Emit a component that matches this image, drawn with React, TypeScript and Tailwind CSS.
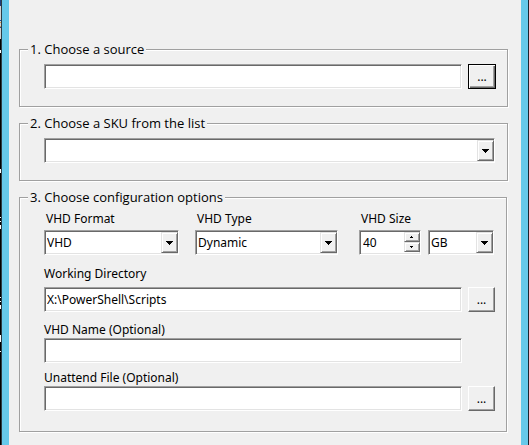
import { useState, type ReactNode } from "react";

const sunken =
  "border border-t-[#a0a0a0] border-l-[#a0a0a0] border-r-white border-b-white bg-white shadow-[inset_1px_1px_0_#696969,inset_-1px_-1px_0_#e3e3e3] rounded-none outline-none text-[12px] leading-[16px] text-black";
const raised =
  "border border-t-[#e3e3e3] border-l-[#e3e3e3] border-r-[#696969] border-b-[#696969] bg-[#f0f0f0] shadow-[inset_1px_1px_0_#fff,inset_-1px_-1px_0_#a0a0a0]";

// Sliver of the console window that shows behind the dialog's left edge.
const backdrop: [height: number, color: string][] = [
  [6, "#1d3c7c"],
  [14, "#d4d4d4"],
  [1, "#1d4c9c"],
  [1, "#d4d4d4"],
  [1, "#d09a50"],
  [3, "#d4d4d4"],
  [1, "#d09a50"],
  [1, "#1d4c9c"],
  [11, "#d4d4d4"],
  [11, "#000"],
  [3, "#fff"],
  [116, "#000"],
  [4, "#fff"],
  [44, "#000"],
  [1, "#fff"],
  [3, "#000"],
  [1, "#fff"],
  [3, "#000"],
  [4, "#fff"],
  [68, "#000"],
  [1, "#fff"],
  [3, "#000"],
  [1, "#fff"],
  [3, "#000"],
  [4, "#fff"],
  [26, "#000"],
  [7, "#fff"],
  [9, "#000"],
  [1, "#fff"],
];

function Group({ title, className, children }: { title: string; className: string; children: ReactNode }) {
  return (
    <fieldset
      className={`min-w-0 border border-[#a0a0a0] pr-[11px] pl-6 shadow-[inset_1px_1px_0_#fff,1px_1px_0_#fff] ${className}`}
    >
      <legend className="-ml-4 bg-[#f0f0f0] px-0.5 font-['Open_Sans','Noto_Sans',sans-serif] text-[13px] leading-[16px]">
        {title}
      </legend>
      {children}
    </fieldset>
  );
}

function TextField({ id, label, value = "" }: { id: string; label?: string; value?: string }) {
  return (
    <input id={id} aria-label={label} type="text" defaultValue={value} className={`h-[25px] min-w-0 flex-1 px-0.5 ${sunken}`} />
  );
}

function BrowseButton({ label, focused = false }: { label: string; focused?: boolean }) {
  return (
    <button
      type="button"
      aria-label={label}
      className={`h-[25px] shrink-0 bg-[#f0f0f0] text-[12px] leading-[16px] ${
        focused
          ? "w-7 border border-black shadow-[inset_1px_1px_0_#fff,inset_-1px_-1px_0_#696969,inset_-2px_-2px_0_#a0a0a0]"
          : "w-[27px] border border-t-white border-l-white border-r-[#696969] border-b-[#696969] shadow-[inset_-1px_-1px_0_#a0a0a0]"
      }`}
    >
      ...
    </button>
  );
}

function DropDown({ id, label, options, className }: { id: string; label?: string; options: string[]; className: string }) {
  return (
    <div className={`relative ${className}`}>
      <select id={id} aria-label={label} className={`block h-[25px] w-full appearance-none pr-5 pl-0.5 ${sunken}`}>
        {options.map((option) => (
          <option key={option}>{option}</option>
        ))}
      </select>
      <span
        className={`pointer-events-none absolute top-0.5 right-px flex h-[21px] w-[17px] items-center justify-center ${raised}`}
      >
        <svg width="7" height="4" viewBox="0 0 7 4" shapeRendering="crispEdges" aria-hidden="true">
          <path d="M0 0h7v1H0zM1 1h5v1H1zM2 2h3v1H2zM3 3h1v1H3z" />
        </svg>
      </span>
    </div>
  );
}

function SizeSpinner() {
  const [size, setSize] = useState(40);
  return (
    <div className="relative w-[62px]">
      <input
        id="vhd-size"
        type="text"
        inputMode="numeric"
        value={size}
        onChange={(e) => setSize(Number(e.target.value) || 0)}
        className={`block h-[25px] w-full pr-5 pl-[3px] ${sunken}`}
      />
      <div className="absolute top-0.5 right-px flex w-4 flex-col">
        <button type="button" aria-label="Increase size" onClick={() => setSize(size + 1)} className={`flex h-[10px] items-center justify-center ${raised}`}>
          <svg width="4" height="2" viewBox="0 0 4 2" shapeRendering="crispEdges" aria-hidden="true">
            <path d="M1 0h1v1H1zM0 1h3v1H0z" />
          </svg>
        </button>
        <button type="button" aria-label="Decrease size" onClick={() => setSize(size - 1)} className={`flex h-[10px] items-center justify-center ${raised}`}>
          <svg width="4" height="2" viewBox="0 0 4 2" shapeRendering="crispEdges" aria-hidden="true">
            <path d="M0 0h3v1H0zM1 1h1v1H1z" />
          </svg>
        </button>
      </div>
    </div>
  );
}

const labelStyle = "text-[12px] leading-[16px]";

export default function App() {
  return (
    <div className="flex min-h-screen bg-black font-['Noto_Sans','Open_Sans',sans-serif] text-black">
      <div className="w-0.5 shrink-0 border-r border-[#2c3c44]" aria-hidden="true">
        {backdrop.map(([height, color], i) => (
          <div key={i} style={{ height, backgroundColor: color }} />
        ))}
      </div>
      <main className="flex min-w-0 flex-1 flex-col border-x-[7px] border-[#66c9ea] bg-[#f0f0f0] pt-[41px] pr-[13px] pl-[10px]">
        <Group title="1. Choose a source" className="h-[66px]">
          <div className="mt-[7px] flex gap-1.5">
            <TextField id="source" label="Source" />
            <BrowseButton label="Browse for source" focused />
          </div>
        </Group>
        <Group title="2. Choose a SKU from the list" className="mt-2 h-[66px]">
          <DropDown id="sku" label="SKU" options={[""]} className="mt-[7px] mr-px" />
        </Group>
        <Group title="3. Choose configuration options" className="mt-2 mr-px pb-5">
          <div className="mt-1.5 flex">
            <div className="mr-4 w-[135px]">
              <label htmlFor="format" className={`ml-0.5 block ${labelStyle}`}>VHD Format</label>
              <DropDown id="format" options={["VHD", "VHDX"]} className="mt-[3px]" />
            </div>
            <div className="mr-[21px] w-[143px]">
              <label htmlFor="type" className={`ml-0.5 block ${labelStyle}`}>VHD Type</label>
              <DropDown id="type" options={["Dynamic", "Fixed"]} className="mt-[3px]" />
            </div>
            <div>
              <label htmlFor="vhd-size" className={`ml-0.5 block ${labelStyle}`}>VHD Size</label>
              <div className="mt-[3px] flex gap-[7px]">
                <SizeSpinner />
                <DropDown id="unit" label="Size unit" options={["GB", "MB", "TB"]} className="w-[66px]" />
              </div>
            </div>
          </div>
          <label htmlFor="directory" className={`mt-[11px] block ${labelStyle}`}>Working Directory</label>
          <div className="mt-[5px] flex gap-1.5">
            <TextField id="directory" value="X:\PowerShell\Scripts" />
            <BrowseButton label="Browse for working directory" />
          </div>
          <label htmlFor="name" className={`mt-2.5 block ${labelStyle}`}>VHD Name (Optional)</label>
          <div className="mr-[33px] flex">
            <TextField id="name" />
          </div>
          <label htmlFor="unattend" className={`mt-[7px] block ${labelStyle}`}>Unattend File (Optional)</label>
          <div className="flex gap-1.5">
            <TextField id="unattend" />
            <BrowseButton label="Browse for unattend file" />
          </div>
        </Group>
      </main>
      <div className="w-px shrink-0 bg-[#1a2530]" />
    </div>
  );
}
